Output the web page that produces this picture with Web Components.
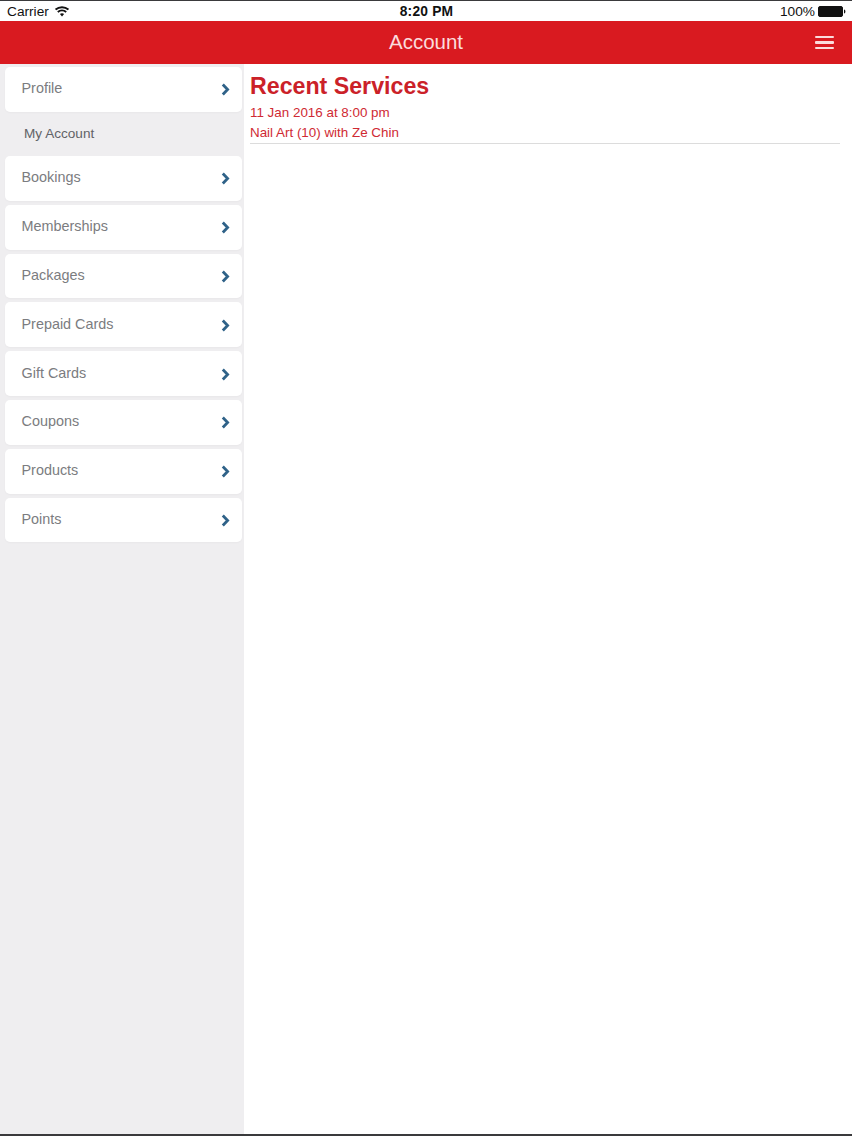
<!DOCTYPE html>
<html>
<head>
<meta charset="utf-8">
<title>Account</title>
<style>
  html, body { margin: 0; padding: 0; }
  body { width: 852px; height: 1136px; overflow: hidden; background: #fff; font-family: "Liberation Sans", Arial, sans-serif; }
  app-shell { height: 1136px; }
</style>
</head>
<body>
<app-shell>
  <status-bar></status-bar>
  <title-bar>Account</title-bar>
  <side-menu slot="side">
    <menu-row>Profile</menu-row>
    <menu-heading>My Account</menu-heading>
    <div class="rows" style="display:flex;flex-direction:column;gap:4px">
      <menu-row>Bookings</menu-row>
      <menu-row>Memberships</menu-row>
      <menu-row>Packages</menu-row>
      <menu-row>Prepaid Cards</menu-row>
      <menu-row>Gift Cards</menu-row>
      <menu-row>Coupons</menu-row>
      <menu-row>Products</menu-row>
      <menu-row>Points</menu-row>
    </div>
  </side-menu>
  <recent-services slot="main" heading="Recent Services">
    <service-item when="11 Jan 2016 at 8:00 pm" what="Nail Art (10) with Ze Chin"></service-item>
  </recent-services>
</app-shell>

<script>
class AppShell extends HTMLElement {
  constructor() {
    super();
    this.attachShadow({mode: 'open'}).innerHTML = `
      <style>
        :host { display: flex; flex-direction: column; box-sizing: border-box; border-top: 1px solid #3a3a3c; border-bottom: 2px solid #3a3a3c; }
        .body { flex: 1; display: flex; min-height: 0; }
        .side { width: 244px; flex: none; background: #efeef0; }
        .main { flex: 1; background: #fff; }
      </style>
      <slot></slot>
      <div class="body">
        <div class="side"><slot name="side"></slot></div>
        <div class="main"><slot name="main"></slot></div>
      </div>`;
  }
}

class StatusBar extends HTMLElement {
  constructor() {
    super();
    this.attachShadow({mode: 'open'}).innerHTML = `
      <style>
        :host { display: grid; grid-template-columns: 1fr auto 1fr; align-items: center; height: 20px; padding: 0 6px 0 7px; background: #fff; color: #111; font-size: 13.7px; }
        .left { display: flex; align-items: center; gap: 6px; }
        .time { font-weight: bold; font-size: 13.8px; letter-spacing: .2px; }
        .right { display: flex; align-items: center; justify-content: flex-end; gap: 3px; }
        svg { display: block; }
      </style>
      <div class="left">Carrier
        <svg width="14" height="11" viewBox="0 0 14 11">
          <path d="M0.6 3.6C4.2 0.4 9.8 0.4 13.4 3.6" fill="none" stroke="#111" stroke-width="1.9"/>
          <path d="M2.8 5.9C5.2 3.9 8.8 3.9 11.2 5.9" fill="none" stroke="#111" stroke-width="1.9"/>
          <path d="M4.9 8C6.1 7 7.9 7 9.1 8L7 10.4Z" fill="#111"/>
        </svg>
      </div>
      <div class="time">8:20 PM</div>
      <div class="right">100%
        <svg width="28" height="11" viewBox="0 0 28 11">
          <rect x="0.5" y="0.5" width="24" height="10" rx="1.5" fill="#111" stroke="#111"/>
          <path d="M26 3.6c1 .2 1.4.9 1.4 1.9s-.4 1.7-1.4 1.9z" fill="#111"/>
        </svg>
      </div>`;
  }
}

class TitleBar extends HTMLElement {
  constructor() {
    super();
    this.attachShadow({mode: 'open'}).innerHTML = `
      <style>
        :host { display: flex; align-items: center; justify-content: center; position: relative; box-sizing: border-box; height: 43px; padding-bottom: 2px; background: #d91a20; color: #fbdcdc; font-size: 20.5px; }
        .burger { position: absolute; right: 18px; top: 15px; width: 19px; height: 13px; display: flex; flex-direction: column; justify-content: space-between; }
        .burger i { display: block; height: 2.4px; background: #fbdcdc; border-radius: 1px; }
      </style>
      <slot></slot>
      <div class="burger"><i></i><i></i><i></i></div>`;
  }
}

class SideMenu extends HTMLElement {
  constructor() {
    super();
    this.attachShadow({mode: 'open'}).innerHTML = `
      <style>
        :host { display: block; padding: 3px 2px 0 5px; }
      </style>
      <slot></slot>`;
  }
}

class MenuRow extends HTMLElement {
  constructor() {
    super();
    this.attachShadow({mode: 'open'}).innerHTML = `
      <style>
        :host { display: flex; align-items: center; justify-content: space-between; box-sizing: border-box; height: 44.8px; padding: 0 12px 0 16.5px; background: #fff; border-radius: 5px; color: #7b7c80; font-size: 14.4px; box-shadow: 0 1px 2px rgba(0,0,0,.03); }
        .label { margin-bottom: 2px; }
        svg { display: block; margin-top: 1px; }
      </style>
      <div class="label"><slot></slot></div>
      <svg width="9" height="13" viewBox="0 0 9 13">
        <path d="M1.8 1.5L6.6 6.5L1.8 11.5" fill="none" stroke="#2f6288" stroke-width="2.8"/>
      </svg>`;
  }
}

class MenuHeading extends HTMLElement {
  constructor() {
    super();
    this.attachShadow({mode: 'open'}).innerHTML = `
      <style>
        :host { display: flex; align-items: center; height: 44.2px; padding-left: 19px; color: #626367; font-size: 13.6px; }
      </style>
      <slot></slot>`;
  }
}

class RecentServices extends HTMLElement {
  constructor() {
    super();
    this.attachShadow({mode: 'open'}).innerHTML = `
      <style>
        :host { display: block; padding: 7px 12px 0 6px; }
        h1 { margin: 0 0 2px; font-size: 23.2px; line-height: 30px; font-weight: bold; color: #cb2128; }
      </style>
      <h1></h1>
      <slot></slot>`;
    this.shadowRoot.querySelector('h1').textContent = this.getAttribute('heading');
  }
}

class ServiceItem extends HTMLElement {
  constructor() {
    super();
    this.attachShadow({mode: 'open'}).innerHTML = `
      <style>
        :host { display: block; border-bottom: 1px solid #dcdcdc; color: #cf2a33; font-size: 13.4px; line-height: 20px; }
      </style>
      <div id="when"></div>
      <div id="what"></div>`;
    this.shadowRoot.getElementById('when').textContent = this.getAttribute('when');
    this.shadowRoot.getElementById('what').textContent = this.getAttribute('what');
  }
}

customElements.define('app-shell', AppShell);
customElements.define('status-bar', StatusBar);
customElements.define('title-bar', TitleBar);
customElements.define('side-menu', SideMenu);
customElements.define('menu-row', MenuRow);
customElements.define('menu-heading', MenuHeading);
customElements.define('recent-services', RecentServices);
customElements.define('service-item', ServiceItem);
</script>
</body>
</html>
